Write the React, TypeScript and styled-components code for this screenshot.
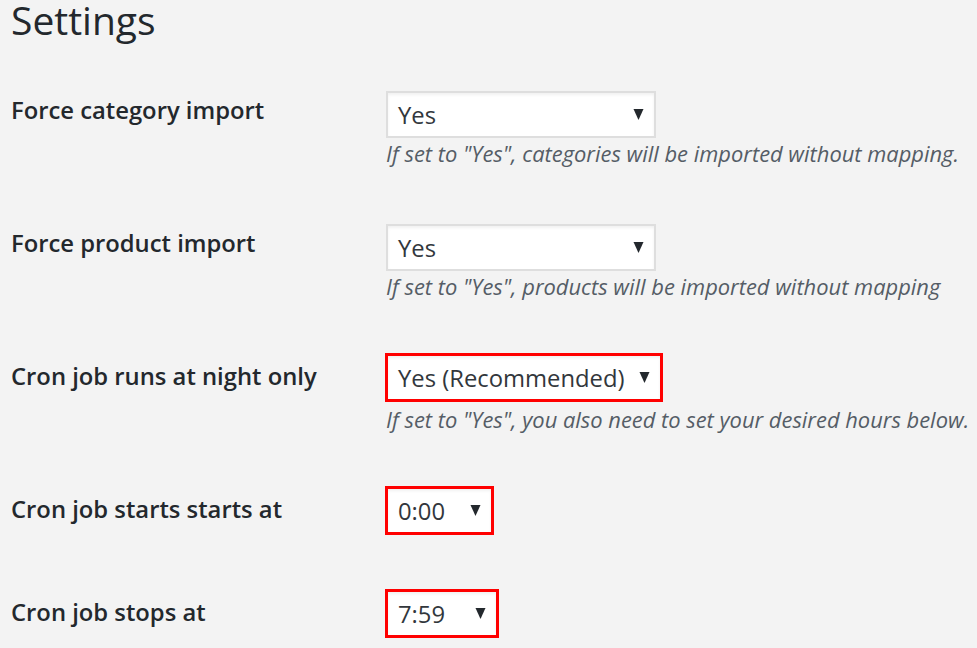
import React from "react";
import styled, { createGlobalStyle } from "styled-components";

const Global = createGlobalStyle`
  html, body { margin: 0; padding: 0; background: #f3f3f3; }
  body { font-family: "Open Sans", "Noto Sans", sans-serif; color: #23282d; }
`;

const Page = styled.div`
  padding: 0 11px;
  width: 977px;
  box-sizing: border-box;
`;

const Title = styled.h1`
  margin: 0;
  font-size: 39px;
  line-height: 39px;
  font-weight: 400;
  color: #23282d;
`;

const Row = styled.div`
  display: grid;
  grid-template-columns: 375px 1fr;
  padding: 26px 0 30px;
  &:first-of-type { padding-top: 52px; }
`;

const Label = styled.div`
  font-size: 23.8px;
  line-height: 24px;
  font-weight: 600;
  margin-top: 7px;
  color: #23282d;
`;

const Control = styled.div`
  display: flex;
  flex-direction: column;
  align-items: flex-start;
`;

const SelectBox = styled.div<{ $w: number; $marked?: boolean }>`
  box-sizing: border-box;
  width: ${(p) => p.$w}px;
  height: 47px;
  margin-top: ${(p) => (p.$marked ? "-3px" : "0")};
  margin-bottom: ${(p) => (p.$marked ? "3px" : "0")};
  background: #fff;
  border: 2px solid #dedede;
  box-shadow: inset 0 2px 3px rgba(0, 0, 0, 0.06);
  display: flex;
  align-items: center;
  justify-content: space-between;
  padding: 0 10px 0 10px;
  font-size: 23.8px;
  color: #32373c;
  outline: ${(p) => (p.$marked ? "3px solid #ff0000" : "none")};
  outline-offset: -2px;
`;

const Arrow = styled.svg`
  width: 11px;
  height: 11px;
  flex: none;
  fill: #23282d;
`;

const Description = styled.p`
  margin: 2px 0 0;
  font-size: 21.9px;
  line-height: 28px;
  font-style: italic;
  color: #555d66;
  white-space: nowrap;
`;

type Setting = {
  label: string;
  value: string;
  width: number;
  marked?: boolean;
  desc?: string;
};

const settings: Setting[] = [
  {
    label: "Force category import",
    value: "Yes",
    width: 270,
    desc: 'If set to "Yes", categories will be imported without mapping.',
  },
  {
    label: "Force product import",
    value: "Yes",
    width: 270,
    desc: 'If set to "Yes", products will be imported without mapping',
  },
  {
    label: "Cron job runs at night only",
    value: "Yes (Recommended)",
    width: 276,
    marked: true,
    desc: 'If set to "Yes", you also need to set your desired hours below.',
  },
  { label: "Cron job starts starts at", value: "0:00", width: 107, marked: true },
  { label: "Cron job stops at", value: "7:59", width: 112, marked: true },
];

export default function App() {
  return (
    <Page>
      <Global />
      <Title>Settings</Title>
      {settings.map((s) => (
        <Row key={s.label}>
          <Label>{s.label}</Label>
          <Control>
            <SelectBox $w={s.width} $marked={s.marked}>
              <span>{s.value}</span>
              <Arrow viewBox="0 0 10 11">
                <polygon points="0,0 10,0 5,11" />
              </Arrow>
            </SelectBox>
            {s.desc && <Description>{s.desc}</Description>}
          </Control>
        </Row>
      ))}
    </Page>
  );
}
